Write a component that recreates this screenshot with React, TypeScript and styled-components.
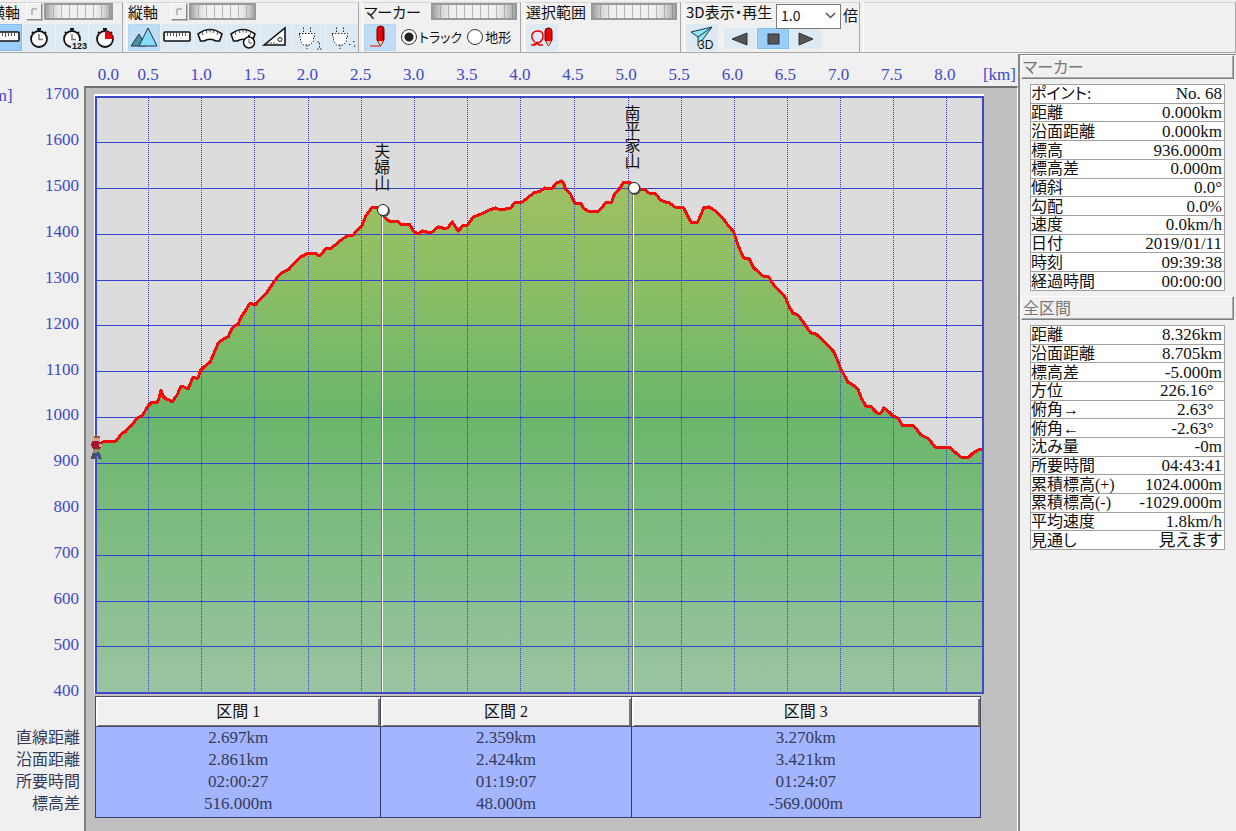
import React from "react";
import styled, { createGlobalStyle, css } from "styled-components";

const BLUE = "#4048c8";
const GOTHIC = `"Noto Sans CJK JP", "Liberation Sans", sans-serif`;
const VALUES = `"Liberation Serif", "Noto Sans CJK JP", serif`;

const GlobalStyle = createGlobalStyle`
  * { box-sizing: border-box; }
  body { margin: 0; background: #f0f0f0; overflow-x: hidden; }
`;

const Frame = styled.div`
  margin-left: -12px;
  min-height: 100vh;
  display: flex;
  flex-direction: column;
  background: #f0f0f0;
  color: #111;
  font-family: ${GOTHIC};
`;

/* ---------- toolbar ---------- */

const Toolbar = styled.header`
  display: flex;
  height: 53px;
  padding-top: 2px;
  gap: 3px;
  border-bottom: 1px solid #a8a8a8;
`;

const Group = styled.section<{ $w?: number }>`
  ${(p) => (p.$w ? css`flex: 0 0 ${p.$w}px;` : css`flex: 1;`)}
  min-width: 0;
  border-top: 1px solid #d4d4d4;
  border-right: 1px solid #a8a8a8;
  border-left: 1px solid #fff;
  padding-left: 1px;
`;

const TopRow = styled.div`
  display: flex;
  align-items: flex-start;
  height: 20px;
`;

const GroupLabel = styled.span<{ $w?: number }>`
  flex: none;
  font-size: 15px;
  line-height: 17px;
  white-space: nowrap;
  font-feature-settings: "palt";
  ${(p) => p.$w && css`width: ${p.$w}px;`}
`;

const ResetButton = styled.button`
  width: 16px;
  height: 17px;
  padding: 0;
  margin-right: 2px;
  background: #f0f0f0;
  border: 1px solid;
  border-color: #fff #888 #888 #fff;
  box-shadow: 1px 1px 0 #bbb;
  display: grid;
  place-items: center;
`;

const Wheel = styled.input<{ $w: number }>`
  appearance: none;
  flex: none;
  width: ${(p) => p.$w}px;
  height: 17px;
  margin: 0;
  border: 2px solid #999;
  background:
    linear-gradient(90deg, rgba(90, 90, 90, 0.5), rgba(150, 150, 150, 0.25) 12%, transparent 24%, transparent 76%, rgba(150, 150, 150, 0.25) 88%, rgba(90, 90, 90, 0.5)),
    repeating-linear-gradient(90deg, #f0f0f0 0 7px, #b8b8b8 7px 8px);
  &::-webkit-slider-thumb { appearance: none; width: 1px; height: 1px; }
`;

const Tools = styled.div`
  display: flex;
  align-items: center;
  gap: 1px;
  height: 28px;
`;

const ToolButton = styled.button<{ $tone?: "on" | "hot"; $short?: boolean }>`
  flex: none;
  width: 32px;
  height: ${(p) => (p.$short ? 21 : 27)}px;
  padding: 0;
  border: 1px solid ${(p) => (p.$tone === "hot" ? "#7fbdf2" : p.$tone === "on" ? "#b4d7f3" : "#dde9f3")};
  background: ${(p) => (p.$tone === "hot" ? "#99cdfb" : p.$tone === "on" ? "#bfdef6" : "#dde9f3")};
  svg { display: block; margin: -1px; overflow: visible; }
`;

const PlayTools = styled.div`
  display: flex;
  gap: 1px;
  padding: 3px 0 0 5px;
`;

const RadioLabel = styled.label`
  display: flex;
  align-items: center;
  gap: 2px;
  margin-left: 4px;
  font-size: 13px;
  line-height: 18px;
  white-space: nowrap;
  font-feature-settings: "palt";
`;

const Radio = styled.input`
  appearance: none;
  width: 16px;
  height: 16px;
  margin: 0;
  border: 1px solid #333;
  border-radius: 50%;
  background: #fff;
  &:checked { background: radial-gradient(circle, #222 0 4px, #fff 5px); }
`;

const SpeedBox = styled.div`
  position: relative;
  flex: none;
  width: 65px;
  height: 25px;
  margin: -1px 2px 0 6px;
  svg { position: absolute; right: 5px; top: 10px; pointer-events: none; }
`;

const Speed = styled.select`
  appearance: none;
  width: 100%;
  height: 100%;
  padding: 0 4px 4px;
  border: 1px solid #7a7a7a;
  border-radius: 0;
  background: #fff;
  font: 14px ${GOTHIC};
  color: #111;
`;

const Unit = styled.span`
  font-size: 15px;
  line-height: 24px;
`;

/* ---------- workspace ---------- */

const Workspace = styled.main`
  flex: 1;
  display: flex;
`;

const ChartArea = styled.section`
  flex: 1;
  min-width: 0;
  display: grid;
  grid-template-columns: 96px minmax(0, 1fr);
  grid-template-rows: 33px minmax(420px, 1fr) auto;
  font-family: ${VALUES};
  font-size: 17px;
  line-height: 18px;
`;

const XAxis = styled.div`
  grid-column: 2;
  grid-row: 1;
  display: flex;
  align-items: flex-end;
  padding: 0 2px 2px 11px;
  color: ${BLUE};
`;

const XTick = styled.span<{ $flex: number }>`
  flex: ${(p) => p.$flex} 1 0;
  min-width: 0;
  display: flex;
  justify-content: center;
`;

const XUnit = styled.span`
  width: 34px;
  text-align: right;
`;

const YAxis = styled.div`
  grid-column: 1;
  grid-row: 2;
  display: flex;
  justify-content: space-between;
  color: ${BLUE};
`;

const YUnit = styled.span`
  padding-top: 1px;
`;

const YTicks = styled.div`
  display: flex;
  flex-direction: column;
  justify-content: space-between;
  text-align: right;
  padding-right: 5px;
  margin: -1px 0 -4px;
`;

const GrayPanel = styled.div`
  grid-column: 2;
  grid-row: 2 / 4;
  background: #c0c0c0;
  border-left: 2px solid #808080;
  border-top: 2px solid #707070;
  border-right: 1px solid #fff;
`;

const PlotBox = styled.div`
  grid-column: 2;
  grid-row: 2;
  position: relative;
  min-height: 0;
  margin: 8px 34px 2px 10px;
`;

const Plot = styled.svg`
  position: absolute;
  inset: 0;
  width: 100%;
  height: 100%;
  overflow: visible;
`;

const PeakPin = styled.div<{ $x: number; $y: number }>`
  position: absolute;
  left: ${(p) => p.$x}%;
  top: ${(p) => p.$y}%;
  width: 12px;
  height: 12px;
  margin: -6px 0 0 -6px;
  border: 1px solid #222;
  border-radius: 50%;
  background: #fff;
  box-shadow: 1px 1px 0 #555;
`;

const PeakName = styled.span`
  position: absolute;
  right: -2px;
  bottom: 24px;
  width: 16px;
  writing-mode: vertical-rl;
  font: 16px/16px ${GOTHIC};
  white-space: nowrap;
`;

const Sections = styled.table`
  grid-column: 1 / 3;
  grid-row: 3;
  display: block;
  margin: 0 37px 13px 0;
  color: #333a58;
  thead, tbody { display: block; }
  tr {
    display: grid;
    grid-template-columns: 107px minmax(0, 285fr) minmax(0, 250fr) minmax(0, 350fr);
  }
`;

const SectionHead = styled.th`
  height: 31px;
  padding: 0;
  border: 1px solid #444a60;
  border-right-width: 0;
  background: #f0f0f0;
  box-shadow: inset 2px 2px 0 #fff, inset -2px -1px 0 #777;
  color: #111;
  font-weight: 400;
  font-size: 16px;
  line-height: 29px;
  &:last-child { border-right-width: 1px; }
`;

const RowHead = styled.th`
  padding: 0 15px 0 0;
  text-align: right;
  font: 16px/18px ${GOTHIC};
`;

const SectionCell = styled.td`
  padding: 0;
  background: #a4b5ff;
  border-left: 1px solid #333a70;
  text-align: center;
  line-height: 22px;
  &:last-child { border-right: 1px solid #333a70; }
  tr:last-child > & { border-bottom: 1px solid #333a70; padding-bottom: 2px; }
`;

/* ---------- sidebar ---------- */

const Sidebar = styled.aside`
  flex: 0 0 218px;
  display: flex;
  flex-direction: column;
  gap: 5px;
  padding: 0 2px 0 1px;
  margin-top: 1px;
  border-left: 2px solid #888;
  border-top: 1px solid #888;
`;

const PanelTitle = styled.h2`
  margin: 0;
  height: 24px;
  padding-left: 1px;
  font: 16px/20px ${GOTHIC};
  font-feature-settings: "palt";
  color: #777;
  border: 1px solid;
  border-color: #fff #808080 #808080 #fff;
  box-shadow: inset -1px -1px 0 #aaa;
`;

const Readout = styled.table<{ $h: number }>`
  height: ${(p) => p.$h}px;
  margin: 0 9px;
  border-collapse: collapse;
  border: 1px solid #a0a0a0;
  background: #fff;
  font-family: ${VALUES};
  th, td {
    padding: 0 2px 0 0;
    border-bottom: 1px solid #a0a0a0;
    font-weight: 400;
    font-feature-settings: "palt";
    line-height: 17px;
    white-space: nowrap;
  }
  th { text-align: left; font-size: 16px; }
  td { text-align: right; font-size: 17px; }
`;

/* ---------- icons ---------- */

const Icon = ({ children, h = 27 }: { children: React.ReactNode; h?: number }) => (
  <svg width="32" height={h} viewBox={`0 0 32 ${h}`} aria-hidden="true">{children}</svg>
);

const Watch = ({ x = 16, y = 15, quarter = false }) => (
  <g>
    <path d={`M${x - 2} ${y - 10}h4M${x} ${y - 11}v3M${x - 7} ${y - 7}l2 2M${x + 7} ${y - 7}l-2 2`} stroke="#111" strokeWidth="2" />
    <circle cx={x} cy={y} r="8" fill="#fff" stroke="#111" strokeWidth="1.8" />
    {quarter ? (
      <path d={`M${x} ${y}v-8a8 8 0 0 1 8 8z`} fill="#f00000" />
    ) : (
      <path d={`M${x} ${y - 5}v5.500h4`} fill="none" stroke="#777" strokeWidth="1.500" />
    )}
  </g>
);

const RulerIcon = () => (
  <Icon>
    <rect x="3" y="8" width="26" height="9" rx="1" fill="#fff" stroke="#111" strokeWidth="1.600" />
    <path d="M6.500 9v3M9.500 9v3M12.500 9v3M15.500 9v4M18.500 9v3M21.500 9v3M24.500 9v3" stroke="#555" />
  </Icon>
);

const Arc = () => (
  <g>
    <path d="M4 10Q16 1 28 10L25.500 17L22 17Q16 13.500 10 17L6.500 17Z" fill="#fff" stroke="#111" strokeWidth="1.600" strokeLinejoin="round" />
    <path d="M8 8l1 3M12 6l1 3M16 5.500v3M20 6l-1 3M24 8l-1 3" stroke="#555" />
  </g>
);

const Plug = ({ mark }: { mark: string }) => (
  <Icon>
    <path d="M6 9h16v7l-4 5h-8l-4-5z" fill="#fff" />
    <path d="M10.500 8V3M17.500 8V3M6 9.500h16M6.500 10v3h1v4l3 4h7l3-4v-4h1v-4M14 21v4" fill="none" stroke="#222" strokeDasharray="1.500 1.500" />
    <path d={mark} fill="none" stroke="#222" strokeDasharray="1.500 1.500" />
  </Icon>
);

const Pencil = ({ x }: { x: number }) => (
  <g stroke="#600" strokeWidth="1">
    <path d={`M${x} 5q0-3 3.500-3t3.500 3v11l-3.500 6l-3.500-6z`} fill="#f00000" />
    <path d={`M${x + 1} 17l2.500 5l2.500-5z`} fill="#e8c0a0" stroke="none" />
    <path d={`M${x + 6} 4v12`} stroke="#900000" strokeWidth="1.500" />
  </g>
);

const IconText = styled.text`
  font: bold 9px "Liberation Sans", sans-serif;
  fill: #111;
`;

const IconText3D = styled.text`
  font: 12px "Liberation Sans", sans-serif;
  fill: #111;
`;

/* ---------- data ---------- */

/* Track profile in plot units: the plot spans x 94-983 and y 94-694. */
const TRACK = `97,443 101,443 105,441 116,441 119,437 122,433 125,432 128,428 131,426 134,422 137,418 142,416 145,411 148,406
152,402 157,403 159,398 161,390 163,396 166,399 169,400 172,402 174,399 177,395 181,386 184,387 188,389 190,384 193,377 196,378
198,378 200,371 205,366 210,362 213,355 216,348 218,343 222,340 225,338 228,337 230,332 233,327 238,324 241,317 245,311 250,303
255,305 260,299 267,292 273,283 278,276 283,272 288,270 292,265 297,260 302,256 308,253 315,253 319,256 323,252 326,248 330,249
336,244 342,239 347,236 353,235 357,230 362,225 366,215 372,207 378,207 382,213 385,218 389,221 397,221 400,224 409,224 413,231
417,234 422,231 426,232 432,232 435,229 438,227 442,228 447,228 452,222 455,227 458,231 462,226 467,225 473,217 478,215 483,213
489,210 495,208 500,210 505,209 510,208 515,202 522,202 527,198 533,193 540,191 544,188 551,189 556,183 561,181 563,183 565,189
570,194 574,203 580,203 583,208 587,211 597,212 601,208 605,203 611,202 614,194 618,190 623,182 629,182 633,187 639,189 644,189
648,193 654,193 660,200 665,202 669,203 674,207 683,208 686,214 688,218 691,223 697,222 700,215 703,208 708,207 715,211 722,218
727,225 733,232 738,247 743,258 748,258 753,268 758,272 762,276 768,277 773,285 779,291 785,298 788,306 792,313 797,315 803,323
810,333 815,334 823,341 828,346 833,352 837,361 840,369 847,382 852,385 857,389 861,399 865,406 870,406 873,410 876,413 880,413
883,408 888,412 892,416 897,418 902,426 906,425 913,426 920,435 928,439 934,447 941,448 948,447 955,453 960,457 968,457 972,453
977,450 982,449`;

const KM_TICKS = Array.from({ length: 17 }, (_, i) => i / 2);
const ALTITUDES = Array.from({ length: 14 }, (_, i) => 1700 - i * 100);

const PEAKS = [
  { name: "夫婦山", x: 383, y: 210 },
  { name: "南平家山", x: 633, y: 188 },
];

const SECTION_ROWS = [
  ["直線距離", "2.697km", "2.359km", "3.270km"],
  ["沿面距離", "2.861km", "2.424km", "3.421km"],
  ["所要時間", "02:00:27", "01:19:07", "01:24:07"],
  ["標高差", "516.000m", "48.000m", "-569.000m"],
];

const MARKER_ROWS = [
  ["ポイント:", "No. 68"],
  ["距離", "0.000km"],
  ["沿面距離", "0.000km"],
  ["標高", "936.000m"],
  ["標高差", "0.000m"],
  ["傾斜", "0.0°"],
  ["勾配", "0.0%"],
  ["速度", "0.0km/h"],
  ["日付", "2019/01/11"],
  ["時刻", "09:39:38"],
  ["経過時間", "00:00:00"],
];

const TOTAL_ROWS = [
  ["距離", "8.326km"],
  ["沿面距離", "8.705km"],
  ["標高差", "-5.000m"],
  ["方位", "226.16°\u00a0\u00a0"],
  ["俯角→", "2.63°\u00a0\u00a0"],
  ["俯角←", "-2.63°\u00a0\u00a0"],
  ["沈み量", "-0m"],
  ["所要時間", "04:43:41"],
  ["累積標高(+)", "1024.000m"],
  ["累積標高(-)", "-1029.000m"],
  ["平均速度", "1.8km/h"],
  ["見通し", "見えます"],
];

/* ---------- parts ---------- */

const Reset = ({ label }: { label: string }) => (
  <ResetButton aria-label={label}>
    <svg width="6" height="7" viewBox="0 0 6 7"><path d="M1 7V1H6" fill="none" stroke="#888" /></svg>
  </ResetButton>
);

const AxisTools = () => (
  <>
    <Group $w={135} aria-label="横軸">
      <TopRow>
        <GroupLabel $w={36}>横軸</GroupLabel>
        <Reset label="横軸リセット" />
        <Wheel type="range" $w={69} aria-label="横軸" />
      </TopRow>
      <Tools>
        <ToolButton $tone="hot" aria-label="距離"><RulerIcon /></ToolButton>
        <ToolButton aria-label="時間"><Icon><Watch /></Icon></ToolButton>
        <ToolButton aria-label="時刻">
          <Icon><Watch /><rect x="15" y="17" width="16" height="9" fill="#dde9f3" /><IconText x="16" y="25">123</IconText></Icon>
        </ToolButton>
        <ToolButton aria-label="経過"><Icon><Watch quarter /></Icon></ToolButton>
      </Tools>
    </Group>
    <Group $w={233} aria-label="縦軸">
      <TopRow>
        <GroupLabel $w={43}>縦軸</GroupLabel>
        <Reset label="縦軸リセット" />
        <Wheel type="range" $w={67} aria-label="縦軸" />
      </TopRow>
      <Tools>
        <ToolButton $tone="on" aria-label="標高">
          <Icon>
            <path d="M3 22L11 10L18 22Z" fill="#4f8fa8" stroke="#234" />
            <path d="M11 22L20 4L29 22Z" fill="#86dcf6" stroke="#234" />
          </Icon>
        </ToolButton>
        <ToolButton aria-label="距離"><RulerIcon /></ToolButton>
        <ToolButton aria-label="速度"><Icon><Arc /></Icon></ToolButton>
        <ToolButton aria-label="平均速度">
          <Icon>
            <Arc />
            <path d="M22 11v3" stroke="#111" strokeWidth="2" />
            <circle cx="22" cy="18.500" r="5.500" fill="#fff" stroke="#111" strokeWidth="1.500" />
            <path d="M22 15v4h3" fill="none" stroke="#555" />
          </Icon>
        </ToolButton>
        <ToolButton aria-label="勾配">
          <Icon>
            <path d="M4 21L25 4V21Z" fill="#fff" stroke="#111" strokeWidth="1.600" />
            <circle cx="20" cy="15.500" r="2" fill="#fff" stroke="#111" />
            <path d="M8 21v-3M11 21v-3M14 21v-3M17 21v-2" stroke="#555" />
          </Icon>
        </ToolButton>
        <ToolButton aria-label="センサー1"><Plug mark="M24.500 18h2v7M24 25h5" /></ToolButton>
        <ToolButton aria-label="センサー2"><Plug mark="M23 20.500h2M27 17.500h2M28 22h2" /></ToolButton>
      </Tools>
    </Group>
  </>
);

const MarkerTools = () => (
  <>
    <Group $w={159} aria-label="マーカー">
      <TopRow>
        <GroupLabel $w={67}>マーカー</GroupLabel>
        <Wheel type="range" $w={86} aria-label="マーカー位置" />
      </TopRow>
      <Tools>
        <ToolButton $tone="on" aria-label="マーカー">
          <Icon><path d="M6 22h11" stroke="#f00000" /><Pencil x={13} /></Icon>
        </ToolButton>
        <RadioLabel><Radio type="radio" name="target" defaultChecked />トラック</RadioLabel>
        <RadioLabel><Radio type="radio" name="target" />地形</RadioLabel>
      </Tools>
    </Group>
    <Group $w={157} aria-label="選択範囲">
      <TopRow>
        <GroupLabel $w={65}>選択範囲</GroupLabel>
        <Wheel type="range" $w={86} aria-label="選択範囲" />
      </TopRow>
      <Tools>
        <ToolButton aria-label="範囲選択">
          <Icon>
            <path d="M5 21h4l3-3M17 21h-4l-3-3M9 18q-4-3-3-7t6-4q5 0 5 5t-5 7q-4 0-4 2" fill="none" stroke="#f00000" strokeWidth="1.500" />
            <g transform="translate(0 3)"><path d="M19 4q0-3 3.500-3t3.500 3v9l-3.500 6l-3.500-6z" fill="#f00000" stroke="#600" /><path d="M20 14l2.500 5l2.500-5z" fill="#e8c0a0" /></g>
          </Icon>
        </ToolButton>
      </Tools>
    </Group>
  </>
);

const PlaybackTools = () => (
  <Group $w={176} aria-label="3D表示・再生">
    <TopRow>
      <GroupLabel $w={84}>3D表示・再生</GroupLabel>
      <SpeedBox>
        <Speed aria-label="再生速度" defaultValue="1.0"><option>1.0</option></Speed>
        <svg width="11" height="7" viewBox="0 0 11 7"><path d="M1 1l4.500 4.500L10 1" fill="none" stroke="#555" strokeWidth="1.500" /></svg>
      </SpeedBox>
      <Unit>倍</Unit>
    </TopRow>
    <Tools>
      <ToolButton aria-label="3D表示">
        <Icon>
          <path d="M5 8L26 3L12 22V13Z" fill="#8ce4f4" stroke="#234" />
          <path d="M12 13L26 3" stroke="#234" />
          <rect x="13" y="16" width="15" height="10" fill="#dde9f3" />
          <IconText3D x="12" y="25">3D</IconText3D>
        </Icon>
      </ToolButton>
      <PlayTools>
        <ToolButton $short aria-label="逆再生"><Icon h={21}><path d="M8 11L23 5V17Z" fill="#555" stroke="#333" /></Icon></ToolButton>
        <ToolButton $short $tone="hot" aria-label="停止"><Icon h={21}><rect x="11" y="6" width="11" height="10" fill="#555" stroke="#333" /></Icon></ToolButton>
        <ToolButton $short aria-label="再生"><Icon h={21}><path d="M23 11L9 5V17Z" fill="#555" stroke="#333" /></Icon></ToolButton>
      </PlayTools>
    </Tools>
  </Group>
);

const Hiker = () => (
  <g>
    <path d="M93 437h7v4h-6z" fill="#d8a080" />
    <path d="M94 436h6v2h-6z" fill="#a05838" />
    <path d="M92 441h7l3 4-2 4h-7l-2-4z" fill="#a01830" />
    <path d="M99 444h3v3h-3z" fill="#d8a080" />
    <path d="M93 449h7l-1 4-6 1z" fill="#9a8a60" />
    <path d="M92 453h4l-1 6h-4zM97 452l3 1 2 6h-4z" fill="#4a5060" />
  </g>
);

const ElevationPlot = () => (
  <PlotBox>
    <Plot viewBox="94 94 889 600" preserveAspectRatio="none" shapeRendering="crispEdges">
      <defs>
        <linearGradient id="terrain" gradientUnits="userSpaceOnUse" x1="0" y1="181" x2="0" y2="693">
          <stop offset="0" stopColor="#9fc161" />
          <stop offset="0.230" stopColor="#88bd66" />
          <stop offset="0.460" stopColor="#69b66a" />
          <stop offset="1" stopColor="#9bc4a2" />
        </linearGradient>
        <pattern id="dots" width="1" height="2" patternUnits="userSpaceOnUse">
          <rect width="1" height="1" fill="#343cd8" />
        </pattern>
      </defs>
      <rect x="94" y="94" width="889" height="600" fill="#fff" />
      <rect x="96" y="96" width="886" height="597" fill="#dcdcdc" />
      <polygon points={`97,693 ${TRACK} 982,693`} fill="url(#terrain)" />
      {KM_TICKS.map((km, i) => (
        <rect key={km} x={95 + Math.round(i * 53.15)} y="97" width="1" height="595" fill="url(#dots)" />
      ))}
      {ALTITUDES.slice(1, -1).map((alt, i) => (
        <rect key={alt} x="96" y={Math.round(142 + i * 45.85)} width="886" height="1" fill="#3444d0" />
      ))}
      <polyline points={TRACK} fill="none" stroke="#f40a0a" strokeWidth="3" strokeLinejoin="round" />
      {PEAKS.map((p) => (
        <g key={p.name}>
          <rect x={p.x - 2} y={p.y} width="1" height={692 - p.y} fill="#777" />
          <rect x={p.x - 1} y={p.y} width="1" height={692 - p.y} fill="#fff" />
        </g>
      ))}
      <path d="M95 97H982M96 693V96M982 96V693H95" fill="none" stroke={BLUE} strokeWidth="2" />
      <Hiker />
    </Plot>
    {PEAKS.map((p) => (
      <PeakPin key={p.name} $x={((p.x - 94) / 889) * 100} $y={((p.y - 94) / 600) * 100}>
        <PeakName>{p.name}</PeakName>
      </PeakPin>
    ))}
  </PlotBox>
);

const Values = ({ rows, height }: { rows: string[][]; height: number }) => (
  <Readout $h={height}>
    <tbody>
      {rows.map(([name, value]) => (
        <tr key={name}>
          <th scope="row">{name}</th>
          <td>{value}</td>
        </tr>
      ))}
    </tbody>
  </Readout>
);

export default function App() {
  return (
    <>
      <GlobalStyle />
      <Frame>
        <Toolbar>
          <AxisTools />
          <MarkerTools />
          <PlaybackTools />
          <Group />
        </Toolbar>
        <Workspace>
          <ChartArea>
            <XAxis>
              {KM_TICKS.map((km) => (
                <XTick key={km} $flex={km === 0 ? 10 : 20}>{km.toFixed(1)}</XTick>
              ))}
              <XTick $flex={4} />
              <XUnit>[km]</XUnit>
            </XAxis>
            <YAxis>
              <YUnit>[m]</YUnit>
              <YTicks>{ALTITUDES.map((alt) => <span key={alt}>{alt}</span>)}</YTicks>
            </YAxis>
            <GrayPanel />
            <ElevationPlot />
            <Sections>
              <thead>
                <tr>
                  <td />
                  {[1, 2, 3].map((n) => <SectionHead key={n} scope="col">区間 {n}</SectionHead>)}
                </tr>
              </thead>
              <tbody>
                {SECTION_ROWS.map(([name, ...values]) => (
                  <tr key={name}>
                    <RowHead scope="row">{name}</RowHead>
                    {values.map((v, i) => <SectionCell key={i}>{v}</SectionCell>)}
                  </tr>
                ))}
              </tbody>
            </Sections>
          </ChartArea>
          <Sidebar>
            <PanelTitle>マーカー</PanelTitle>
            <Values rows={MARKER_ROWS} height={207} />
            <PanelTitle>全区間</PanelTitle>
            <Values rows={TOTAL_ROWS} height={225} />
          </Sidebar>
        </Workspace>
      </Frame>
    </>
  );
}
